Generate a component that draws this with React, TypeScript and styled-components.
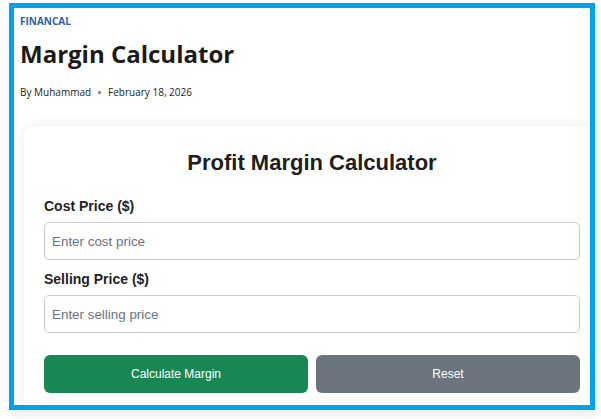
import React from "react";
import styled, { createGlobalStyle } from "styled-components";

const GlobalStyle = createGlobalStyle`
  html, body {
    margin: 0;
    padding: 0;
    background: #ffffff;
  }
`;

const Page = styled.div`
  width: 601px;
  height: 419px;
  padding: 3px 0 0 9px;
  box-sizing: border-box;
  background: #ffffff;
`;

const Frame = styled.div`
  width: 586px;
  height: 407px;
  box-sizing: border-box;
  border: 5px solid #00a3e8;
  overflow: hidden;
  background: #ffffff;
  box-shadow: 2px 4px 10px rgba(0, 0, 0, 0.1);
`;

const Header = styled.header`
  padding: 6px 6px 0;
  font-family: "Open Sans", "Noto Sans", sans-serif;
  color: #1b1b1b;
`;

const Category = styled.div`
  font-size: 10px;
  line-height: 14px;
  font-weight: 700;
  color: #2f5f9e;
  text-transform: uppercase;
`;

const Title = styled.h1`
  margin: 8px 0 0;
  font-size: 24px;
  line-height: 36px;
  font-weight: 700;
  color: #1a1a1a;
`;

const Meta = styled.div`
  display: flex;
  align-items: center;
  gap: 7px;
  margin-top: 12px;
  font-size: 10px;
  line-height: 16px;
  color: #222;
`;

const Dot = styled.span`
  width: 3px;
  height: 3px;
  border-radius: 50%;
  background: #777;
`;

const Card = styled.section`
  width: 576px;
  margin: 26px 0 0 10px;
  padding: 20px;
  box-sizing: border-box;
  background: #ffffff;
  border-radius: 12px;
  box-shadow: 0 0 14px rgba(0, 0, 0, 0.08);
  font-family: "Liberation Sans", Arial, sans-serif;
`;

const CardTitle = styled.h2`
  margin: 2px 0 20px;
  text-align: center;
  font-size: 22px;
  line-height: 30px;
  font-weight: 700;
  color: #1e1e1e;
`;

const Field = styled.div`
  display: flex;
  flex-direction: column;
  gap: 8px;
  margin-bottom: 11px;
`;

const Label = styled.label`
  font-size: 14px;
  line-height: 16px;
  font-weight: 700;
  color: #222;
`;

const Input = styled.input`
  height: 38px;
  padding: 0 7px;
  box-sizing: border-box;
  border: 1px solid #cccccc;
  border-radius: 5px;
  font-family: "Liberation Sans", Arial, sans-serif;
  font-size: 13.4px;
  color: #333;
  outline: none;

  &::placeholder {
    color: #6b7280;
  }
`;

const Actions = styled.div`
  display: grid;
  grid-template-columns: 1fr 1fr;
  gap: 8px;
  margin-top: 22px;
`;

const Button = styled.button<{ $variant: "primary" | "secondary" }>`
  height: 38px;
  border: none;
  border-radius: 6px;
  background: ${(p) => (p.$variant === "primary" ? "#198754" : "#6c757d")};
  color: #ffffff;
  font-family: "Liberation Sans", Arial, sans-serif;
  font-size: 12px;
  cursor: pointer;
`;

export default function App() {
  return (
    <>
      <GlobalStyle />
      <Page>
        <Frame>
          <Header>
            <Category>Financal</Category>
            <Title>Margin Calculator</Title>
            <Meta>
              <span>By Muhammad</span>
              <Dot />
              <span>February 18, 2026</span>
            </Meta>
          </Header>
          <Card>
            <CardTitle>Profit Margin Calculator</CardTitle>
            <Field>
              <Label>Cost Price ($)</Label>
              <Input placeholder="Enter cost price" />
            </Field>
            <Field>
              <Label>Selling Price ($)</Label>
              <Input placeholder="Enter selling price" />
            </Field>
            <Actions>
              <Button $variant="primary">Calculate Margin</Button>
              <Button $variant="secondary">Reset</Button>
            </Actions>
          </Card>
        </Frame>
      </Page>
    </>
  );
}
